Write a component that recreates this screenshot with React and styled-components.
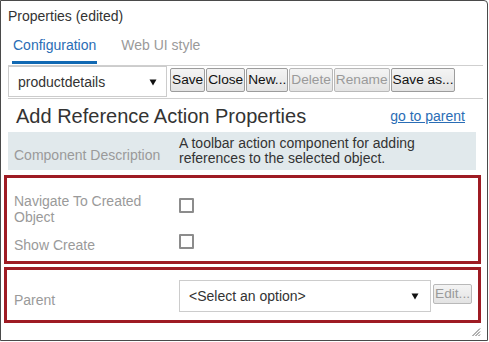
import React from "react";
import styled, { createGlobalStyle } from "styled-components";

const Global = createGlobalStyle`
  html, body { margin: 0; padding: 0; background: #fff; }
  body { font-family: "Liberation Sans", Arial, sans-serif; color: #333; }
  * { box-sizing: border-box; }
`;

const Window = styled.div`
  position: relative;
  width: 488px;
  height: 341px;
  border: 1px solid #4a4a4a;
  border-top-right-radius: 4px;
  background: #fff;
`;

const Title = styled.div`
  padding: 7px 7px 0;
  font-size: 14px;
  line-height: 16px;
  color: #333;
`;

const Tabs = styled.div`
  display: flex;
  gap: 23px;
  padding-left: 11px;
`;

const Tab = styled.div`
  padding: 13px 1px 8px;
  font-size: 14px;
  line-height: 16px;
  color: ${(p) => (p.$active ? "#2a6db5" : "#9a9a9a")};
  border-bottom: 3px solid ${(p) => (p.$active ? "#1169b3" : "transparent")};
`;

const Content = styled.div`
  padding: 0 4px 0 7px;
`;

const Toolbar = styled.div`
  display: flex;
  align-items: flex-start;
  margin-top: 1px;
  border-top: 1px solid #cfcfcf;
  border-bottom: 1px solid #cfcfcf;
  height: 34px;
`;

const Select = styled.div`
  position: relative;
  display: flex;
  align-items: center;
  width: ${(p) => p.$w}px;
  height: ${(p) => p.$h}px;
  padding-left: 9px;
  border: 1px solid #cccccc;
  background: #fff;
  font-size: 14px;
  color: #333;
`;

const Arrow = styled.svg`
  position: absolute;
  right: ${(p) => p.$r}px;
  top: 50%;
  margin-top: -3px;
`;

const Btn = styled.button`
  height: ${(p) => p.$h || 24}px;
  margin: ${(p) => p.$mt || 2}px 0 0 ${(p) => p.$ml || 1}px;
  padding: 0 1px;
  border: 1px solid ${(p) => (p.disabled ? "#b9b9b9" : "#9c9c9c")};
  border-radius: 2px;
  background: linear-gradient(#f4f4f4, #e3e3e3);
  font-family: "Liberation Sans", Arial, sans-serif;
  font-size: 13.7px;
  line-height: 16px;
  color: ${(p) => (p.disabled ? "#9a9a9a" : "#111")};
`;

const HeadRow = styled.div`
  display: flex;
  justify-content: space-between;
  align-items: flex-start;
  padding: 6px 18px 0 8px;
  height: 33px;
`;

const Heading = styled.div`
  font-size: 20px;
  line-height: 23px;
  color: #333;
`;

const Link = styled.a`
  margin-top: 3px;
  font-size: 14px;
  line-height: 16px;
  color: #2a6db5;
  text-decoration: underline;
`;

const Desc = styled.div`
  display: grid;
  grid-template-columns: 171px 1fr;
  margin-right: 7px;
  height: 38px;
  background: #e1e9ec;
`;

const DescLabel = styled.div`
  padding: 15px 0 0 6px;
  font-size: 14px;
  line-height: 16px;
  color: #9a9a9a;
`;

const DescText = styled.div`
  padding: 4px 0 0;
  font-size: 14px;
  line-height: 15px;
  color: #333;
`;

const Group = styled.div`
  margin: ${(p) => p.$mt}px 6px 0 3px;
  height: ${(p) => p.$h}px;
  border: 3px solid #9e1b23;
  padding: ${(p) => p.$pad};
  display: flex;
  flex-direction: column;
  gap: 9px;
`;

const Row = styled.div`
  display: grid;
  grid-template-columns: 165px auto auto;
  justify-content: start;
  align-items: ${(p) => p.$align || "center"};
`;

const Label = styled.div`
  font-size: 14px;
  line-height: 16px;
  color: #9a9a9a;
  padding-right: 8px;
  margin-top: ${(p) => p.$mt || 0}px;
`;

const Check = styled.span`
  display: block;
  width: 15px;
  height: 15px;
  border: 2px solid #8c8c8c;
  border-radius: 1px;
  margin-bottom: 7px;
`;

const Grip = styled.svg`
  position: absolute;
  right: 6px;
  bottom: 3px;
`;

const Tri = ({ r }) => (
  <Arrow $r={r} width="8" height="7" viewBox="0 0 8 7">
    <path d="M0.5 0.5 L7.5 0.5 L4 6.5 Z" fill="#111" />
  </Arrow>
);

export default function App() {
  return (
    <>
      <Global />
      <Window>
        <Title>Properties (edited)</Title>
        <Tabs>
          <Tab $active>Configuration</Tab>
          <Tab>Web UI style</Tab>
        </Tabs>
        <Content>
          <Toolbar>
            <Select $w={159} $h={31}>
              productdetails
              <Tri r={9} />
            </Select>
            <Btn $ml={3}>Save</Btn>
            <Btn>Close</Btn>
            <Btn>New...</Btn>
            <Btn disabled>Delete</Btn>
            <Btn disabled>Rename</Btn>
            <Btn>Save as...</Btn>
          </Toolbar>
          <HeadRow>
            <Heading>Add Reference Action Properties</Heading>
            <Link>go to parent</Link>
          </HeadRow>
          <Desc>
            <DescLabel>Component Description</DescLabel>
            <DescText>
              A toolbar action component for adding
              <br />
              references to the selected object.
            </DescText>
          </Desc>
        </Content>
        <Group $mt={5} $h={89} $pad="15px 7px 9px">
          <Row>
            <Label>Navigate To Created Object</Label>
            <Check />
          </Row>
          <Row>
            <Label>Show Create</Label>
            <Check />
          </Row>
        </Group>
        <Group $mt={3} $h={56} $pad="10px 7px 8px">
          <Row $align="flex-start">
            <Label $mt={12}>Parent</Label>
            <Select $w={252} $h={32}>
              &lt;Select an option&gt;
              <Tri r={11} />
            </Select>
            <Btn disabled $h={20} $mt={4} $ml={2}>Edit...</Btn>
          </Row>
        </Group>
        <Grip width="10" height="10" viewBox="0 0 10 10">
          <path d="M9 1.5 L1.5 9 M9 4.5 L4.5 9 M9 7.5 L7.5 9" stroke="#666" strokeWidth="1" />
        </Grip>
      </Window>
    </>
  );
}
